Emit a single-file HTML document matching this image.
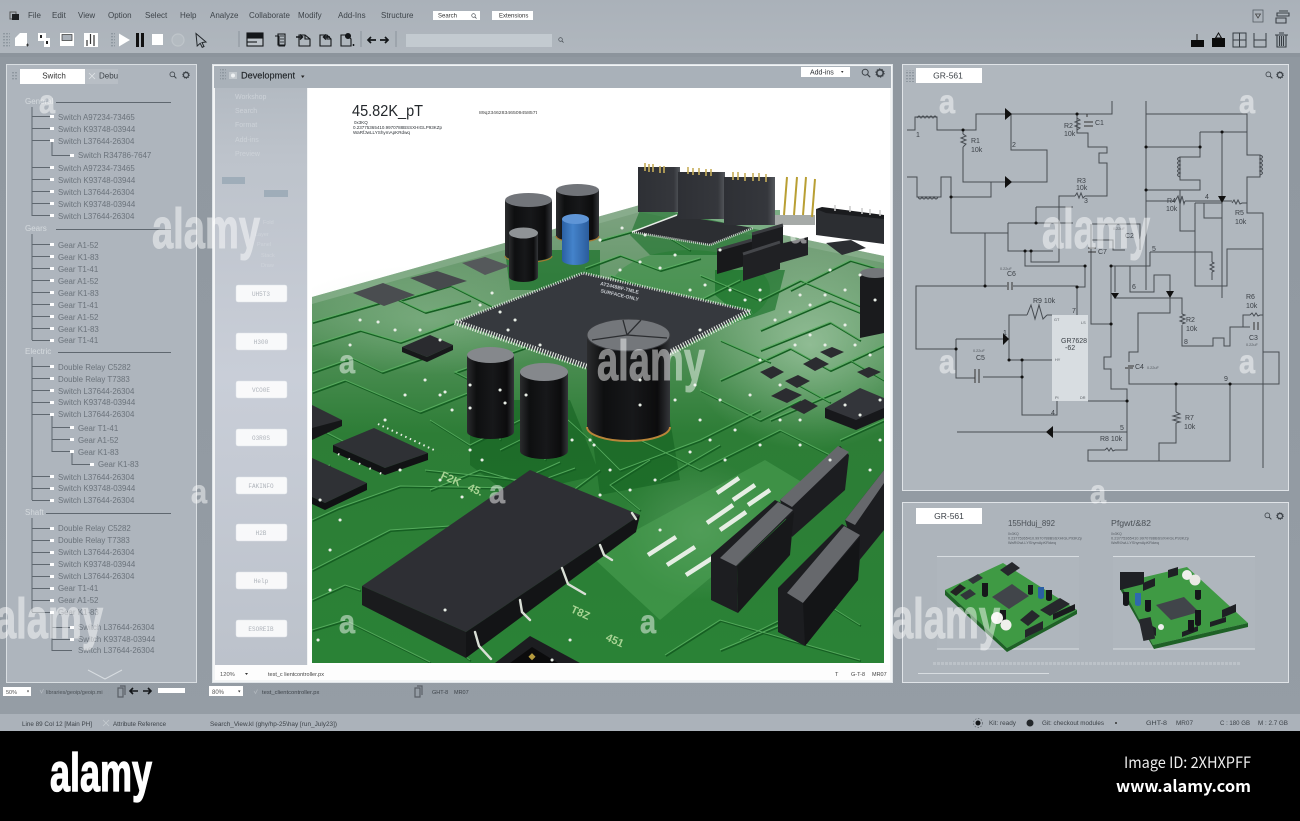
<!DOCTYPE html>
<html><head><meta charset="utf-8"><title>PCB design</title>
<style>
html,body{margin:0;padding:0;width:1300px;height:821px;overflow:hidden;background:#000}
svg{display:block;font-family:"Liberation Sans",sans-serif}
.m{font-size:8px;fill:#3e444a}
.t text{font-size:7.9px;fill:#6b737b}
.h text{font-size:8px;fill:#d5dade}
.tl{stroke:#5f676f;stroke-width:1;fill:none}
.sc{stroke:#474c52;stroke-width:1;fill:none}
.sl text{font-size:7px;fill:#3c4147}
.b{fill:#fff;fill-opacity:.88;stroke:#dfe3e8;stroke-width:.5}
.bt{font-family:"Liberation Mono",monospace;font-size:6px;fill:#aeb3ba;text-anchor:middle}
.s{font-size:6.5px;fill:#3c4248}
.wm{font-weight:bold;fill:#fff;stroke:#fff;stroke-width:1;opacity:.48}
</style></head><body>
<svg width="1300" height="821" viewBox="0 0 1300 821" xmlns="http://www.w3.org/2000/svg">
<defs>
<linearGradient id="tb" x1="0" y1="0" x2="0" y2="1"><stop offset="0" stop-color="#aab1b9"/><stop offset="1" stop-color="#b0b7be"/></linearGradient>
<linearGradient id="bg" x1="0" y1="0" x2="0" y2="1"><stop offset="0" stop-color="#8f979f"/><stop offset="1" stop-color="#959da5"/></linearGradient>
<linearGradient id="sb" x1="0" y1="0" x2="0" y2="1"><stop offset="0" stop-color="#b3bac2"/><stop offset=".12" stop-color="#bdc3cb"/><stop offset=".5" stop-color="#c9ced8"/><stop offset="1" stop-color="#bcc2cb"/></linearGradient>
<linearGradient id="pb" x1="0" y1="0" x2="0" y2="1"><stop offset="0" stop-color="#7ea281"/><stop offset=".25" stop-color="#5a9560"/><stop offset=".5" stop-color="#2d7d36"/><stop offset="1" stop-color="#2a8236"/></linearGradient>
<radialGradient id="pale" cx=".5" cy=".5" r=".5"><stop offset="0" stop-color="#c4e0c6" stop-opacity=".55"/><stop offset="1" stop-color="#c4e0c6" stop-opacity="0"/></radialGradient>
<linearGradient id="cy" x1="0" y1="0" x2="1" y2="0"><stop offset="0" stop-color="#2b2c2e"/><stop offset=".2" stop-color="#0e0f10"/><stop offset=".55" stop-color="#17181a"/><stop offset=".85" stop-color="#0c0c0d"/><stop offset="1" stop-color="#34363a"/></linearGradient>
<linearGradient id="cyb" x1="0" y1="0" x2="1" y2="0"><stop offset="0" stop-color="#2a5fa3"/><stop offset=".4" stop-color="#4483cb"/><stop offset="1" stop-color="#2b5c9c"/></linearGradient>
<linearGradient id="hd" x1="0" y1="0" x2="1" y2="0"><stop offset="0" stop-color="#2e3035"/><stop offset=".85" stop-color="#35373c"/><stop offset="1" stop-color="#55585d"/></linearGradient>
<clipPath id="pc"><rect x="312" y="150" width="572" height="513"/></clipPath>
<symbol id="sr" viewBox="0 0 10 10"><circle cx="4.2" cy="4.2" r="3" fill="none" stroke="#3d4349" stroke-width="1"/><path d="M6.4 6.4 9.2 9.2" stroke="#3d4349" stroke-width="1.2"/></symbol>
<symbol id="gr" viewBox="0 0 10 10"><circle cx="5" cy="5" r="3.2" fill="none" stroke="#3d4349" stroke-width="1.6"/><circle cx="5" cy="5" r="4.1" fill="none" stroke="#3d4349" stroke-width="1.1" stroke-dasharray="1.3 1.3"/></symbol>
<pattern id="gp" width="3" height="3" patternUnits="userSpaceOnUse"><rect width="2" height="1.4" fill="#8f98a0"/></pattern>
<path id="tr" d="M312 322 L395 298 L425 312 L470 300 M312 345 L360 330 L400 342 L455 322 M312 372 L352 358 L382 372 L445 350 M312 392 L345 380 L420 412 L470 392 M312 425 L360 450 M425 470 L520 480 L560 462 M312 520 L338 508 L400 486 L520 488 L575 468 M312 570 L390 530 L480 524 M312 600 L345 585 L360 590 M312 630 L345 620 L430 662 M420 622 L470 660 M560 335 L455 372 L510 400 M520 420 L470 445 L430 420 M568 420 L590 440 L620 470 L700 440 L760 410 M640 440 L700 470 L780 430 L830 455 M500 450 L560 420 M500 370 L500 440 M545 405 L545 460 M665 655 L720 620 L860 660 M720 650 L780 625 M585 268 L620 255 L660 270 L700 258 M600 240 L650 226 L690 250 M610 275 L640 285 M700 275 L760 300 L800 280 L870 310 M760 330 L830 300 L884 322 M760 350 L830 322 L860 340 M720 380 L790 348 L830 370 L884 345 M700 390 L760 420 L800 400 M770 420 L840 390 M840 440 L884 420 M790 290 L850 260 L884 270 M700 300 L740 280 M400 300 L450 285 L520 320 M312 470 L330 465 M430 490 L480 470 L540 488 M600 470 L560 500 M650 460 L610 485 L640 510 M660 480 L720 445 M850 360 L884 380 M790 380 L830 402 M720 340 L770 362 M740 640 L820 600 L860 625"/>
<path id="vias" d="M360 320h.1M378 322h.1M350 345h.1M395 330h.1M420 330h.1M440 340h.1M480 305h.1M500 312h.1M515 320h.1M492 293h.1M405 395h.1M425 380h.1M445 392h.1M470 385h.1M385 420h.1M440 395h.1M500 390h.1M526 395h.1M452 410h.1M470 450h.1M482 460h.1M440 480h.1M462 497h.1M572 440h.1M594 445h.1M610 470h.1M630 490h.1M655 480h.1M690 452h.1M710 440h.1M725 460h.1M760 445h.1M735 430h.1M780 420h.1M700 420h.1M720 400h.1M695 385h.1M750 395h.1M780 385h.1M800 420h.1M845 405h.1M860 415h.1M880 400h.1M795 345h.1M810 335h.1M825 345h.1M845 325h.1M855 345h.1M870 355h.1M775 320h.1M790 312h.1M810 305h.1M825 295h.1M845 290h.1M860 275h.1M760 290h.1M745 300h.1M620 270h.1M640 262h.1M660 268h.1M675 255h.1M690 290h.1M705 285h.1M645 235h.1M622 228h.1M600 240h.1M720 250h.1M730 290h.1M600 495h.1M640 405h.1M640 380h.1M675 400h.1M660 530h.1M652 552h.1M570 640h.1M445 610h.1M552 660h.1M590 440h.1M320 500h.1M340 520h.1M330 550h.1M330 590h.1M318 640h.1M400 470h.1M505 403h.1M470 408h.1M508 330h.1M540 345h.1M880 440h.1M870 470h.1M830 460h.1M800 445h.1M760 300h.1M700 330h.1M830 270h.1M875 300h.1M760 360h.1M800 295h.1"/>
</defs>

<!-- backgrounds -->
<rect width="1300" height="731" fill="url(#bg)"/>
<rect width="1300" height="53" fill="url(#tb)"/>
<rect y="714" width="1300" height="17" fill="#abb2ba"/>
<rect y="731" width="1300" height="90" fill="#000"/>

<!-- menu -->
<g fill="#1c1f22"><rect x="10" y="12" width="6" height="7" fill="none" stroke="#555" stroke-width="1"/><rect x="12" y="14" width="7" height="6"/></g>
<g class="m">
<text x="28" y="18">File</text><text x="52" y="18">Edit</text><text x="78" y="18">View</text><text x="108" y="18">Option</text><text x="145" y="18">Select</text><text x="180" y="18">Help</text><text x="210" y="18">Analyze</text><text x="249" y="18">Collaborate</text><text x="298" y="18">Modify</text><text x="338" y="18">Add-Ins</text><text x="381" y="18">Structure</text>
</g>
<rect x="433" y="11" width="47" height="9" fill="#fff"/><text x="438" y="17.5" font-size="6" fill="#333">Search</text><use href="#sr" x="471" y="13" width="6" height="6"/>
<rect x="492" y="11" width="41" height="9" fill="#fff"/><text x="499" y="17.5" font-size="6" fill="#333">Extensions</text>
<rect x="1253" y="10" width="10" height="12" fill="none" stroke="#555d64" stroke-width=".8"/><path d="M1255.500 14h5l-2.500 4z" fill="none" stroke="#444" stroke-width=".8"/>
<path d="M1277 13h12v3h-12zM1279 11h9M1276 18h10v5h-10z" fill="none" stroke="#3b4147" stroke-width="1.100"/>

<!-- toolbar -->
<rect x="3" y="33" width="7" height="14" fill="url(#gp)"/>
<path d="M15 46V38l5-5h7v13z" fill="#fff"/><path d="M26 45h3M27.500 43.500v3" stroke="#222" stroke-width=".8"/>
<rect x="38" y="33" width="8" height="8" fill="#fff"/><rect x="44" y="38" width="6" height="9" fill="#fff"/><rect x="40" y="35" width="2" height="3" fill="#222"/><rect x="46" y="41" width="2" height="3" fill="#222"/>
<path d="M60 33h14v13H60z" fill="#fff"/><rect x="62" y="34.500" width="10" height="6" fill="#aab1b9" stroke="#333" stroke-width=".7"/>
<rect x="84" y="33" width="14" height="14" fill="#fff"/><path d="M87 40v6M90.500 34v10M94 35v11" stroke="#333" stroke-width="1.200"/>
<rect x="110" y="33" width="5" height="14" fill="url(#gp)"/>
<path d="M119 33.500 130 40l-11 6.500z" fill="#fff"/>
<rect x="136" y="33" width="3" height="14" fill="#111"/><rect x="141" y="33" width="3" height="14" fill="#111"/>
<rect x="152" y="34" width="11" height="11" fill="#fff"/>
<circle cx="178" cy="40" r="6" fill="#b4bbc1" stroke="#bfc5ca" stroke-width="1.200"/>
<path d="M196 33.500 206 42l-4 .5 2 4-1.800.8-2-4-3 2.700z" fill="none" stroke="#23272b" stroke-width="1"/>
<path d="M239 31v16M361 31v16M396 31v16" stroke="#8b939b"/>
<g fill="none" stroke="#14171a" stroke-width="1.100">
<rect x="247" y="33" width="16" height="5" fill="#14171a"/><rect x="247" y="38" width="16" height="8" fill="#bcc2c8"/><path d="M247 42h10"/>
<path d="M278 34h7v11h-7zM275 36h4v10h6"/><path d="M280 36h4M280 39h4M280 42h4" stroke-width=".7"/>
<path d="M299 35h6l5 4v7h-11zM305 35v4h5"/><path d="M296 37h6M300 34.500l2.500 2.500-2.500 2.500" stroke-width="1.500"/>
<path d="M320 35h7l4 4v7h-11zM327 35v4h4"/><path d="M330 37h-6M326 34.500l-2.500 2.500 2.500 2.500" stroke-width="1.500"/>
<path d="M341 35h6l4 4v7h-10z"/><circle cx="348" cy="36" r="2.500" fill="#14171a"/><path d="M353.500 44v2" stroke-width="1.500"/>
<path d="M368 40h8M371 37l-3 3 3 3M380 40h8M385 37l3 3-3 3" stroke-width="1.700"/>
</g>
<rect x="406" y="34" width="146" height="13" fill="#c3cad0"/>
<use href="#sr" x="558" y="37" width="6" height="6"/>
<g fill="#0b0b0b"><rect x="1191" y="40" width="13" height="7"/><path d="M1197 34v6" stroke="#222"/><rect x="1212" y="38" width="13" height="9"/><path d="M1218.500 33l3 5h-6z" fill="none" stroke="#111"/></g>
<g fill="none" stroke="#373d43" stroke-width="1"><rect x="1233" y="33" width="13" height="14"/><path d="M1233 40h13M1239.500 33v14"/><path d="M1254 33v14h12V33M1254 40h12"/><path d="M1275 35h13M1277 35v12h9V35M1279.500 36v10M1281.500 36v10M1283.500 36v10M1279 33h5" stroke-width="1.100"/></g>
<rect x="0" y="53" width="1300" height="4" fill="#8b939b" opacity=".6"/>

<!-- left panel -->
<rect x="6.500" y="64.500" width="190" height="618" fill="#aeb5bd" stroke="#d9dee2"/>
<rect x="12" y="71" width="6" height="10" fill="url(#gp)"/>
<rect x="20" y="69" width="65" height="15" fill="#fff"/><text x="54" y="78.500" font-size="8" fill="#333" text-anchor="middle">Switch</text>
<rect x="85" y="69" width="33" height="15" fill="#b8bec5"/><path d="M89 73l6 6M95 73l-6 6" stroke="#dfe3e6" stroke-width=".8"/><text x="99" y="78.500" font-size="8" fill="#3c4248">Debu</text>
<use href="#sr" x="169" y="71" width="8" height="8"/><use href="#gr" x="182" y="71" width="8" height="8"/>
<g class="h"><text x="25" y="104">General</text><text x="25" y="231">Gears</text><text x="25" y="354">Electric</text><text x="25" y="515">Shaft</text></g>
<path class="tl" d="M56 102.500H171M56 229.500H171M58 352.500H171M46 513.500H171" stroke-width="1.300"/>
<path class="tl" d="M32 107V216M32 116.500H50M32 128.500H50M32 140.500H50M52 141V155.500H70M32 167.500H50M32 179.500H50M32 191.500H50M32 203.500H50M32 215.500H50
M32 234V340M32 244.500H50M32 256.500H50M32 268.500H50M32 280.500H50M32 292.500H50M32 304.500H50M32 316.500H50M32 328.500H50M32 340.500H50
M32 357V500M32 366.500H50M32 378.500H50M32 390.500H50M32 402.500H50M32 414.500H50M52 415V452M52 427.500H70M52 439.500H70M52 451.500H70M72 452V465M72 464.500H90M32 476.500H50M32 488.500H50M32 500.500H50
M32 518V612M32 528.500H50M32 540.500H50M32 552.500H50M32 564.500H50M32 576.500H50M32 588.500H50M32 600.500H50M32 612.500H50M52 613V651M52 627.500H70M52 639.500H70M52 650.500H72"/>
<path fill="#fff" d="M50 115h4v3h-4zM50 127h4v3h-4zM50 139h4v3h-4zM70 154h4v3h-4zM50 166h4v3h-4zM50 178h4v3h-4zM50 190h4v3h-4zM50 202h4v3h-4zM50 214h4v3h-4zM50 243h4v3h-4zM50 255h4v3h-4zM50 267h4v3h-4zM50 279h4v3h-4zM50 291h4v3h-4zM50 303h4v3h-4zM50 315h4v3h-4zM50 327h4v3h-4zM50 339h4v3h-4zM50 365h4v3h-4zM50 377h4v3h-4zM50 389h4v3h-4zM50 401h4v3h-4zM50 413h4v3h-4zM70 426h4v3h-4zM70 438h4v3h-4zM70 450h4v3h-4zM90 463h4v3h-4zM50 475h4v3h-4zM50 487h4v3h-4zM50 499h4v3h-4zM50 527h4v3h-4zM50 539h4v3h-4zM50 551h4v3h-4zM50 563h4v3h-4zM50 575h4v3h-4zM50 587h4v3h-4zM50 599h4v3h-4zM50 611h4v3h-4zM70 626h4v3h-4zM70 638h4v3h-4z"/>
<g class="t">
<text x="58" y="120">Switch A97234-73465</text><text x="58" y="132">Switch K93748-03944</text><text x="58" y="144">Switch L37644-26304</text><text x="78" y="158">Switch R34786-7647</text><text x="58" y="171">Switch A97234-73465</text><text x="58" y="183">Switch K93748-03944</text><text x="58" y="195">Switch L37644-26304</text><text x="58" y="207">Switch K93748-03944</text><text x="58" y="219">Switch L37644-26304</text>
<text x="58" y="248">Gear A1-52</text><text x="58" y="260">Gear K1-83</text><text x="58" y="272">Gear T1-41</text><text x="58" y="284">Gear A1-52</text><text x="58" y="296">Gear K1-83</text><text x="58" y="308">Gear T1-41</text><text x="58" y="320">Gear A1-52</text><text x="58" y="332">Gear K1-83</text><text x="58" y="343">Gear T1-41</text>
<text x="58" y="370">Double Relay C5282</text><text x="58" y="382">Double Relay T7383</text><text x="58" y="394">Switch L37644-26304</text><text x="58" y="405">Switch K93748-03944</text><text x="58" y="417">Switch L37644-26304</text><text x="78" y="431">Gear T1-41</text><text x="78" y="443">Gear A1-52</text><text x="78" y="455">Gear K1-83</text><text x="98" y="467">Gear K1-83</text><text x="58" y="480">Switch L37644-26304</text><text x="58" y="491">Switch K93748-03944</text><text x="58" y="503">Switch L37644-26304</text>
<text x="58" y="531">Double Relay C5282</text><text x="58" y="543">Double Relay T7383</text><text x="58" y="555">Switch L37644-26304</text><text x="58" y="567">Switch K93748-03944</text><text x="58" y="579">Switch L37644-26304</text><text x="58" y="591">Gear T1-41</text><text x="58" y="603">Gear A1-52</text><text x="58" y="615">Gear K1-83</text><text x="78" y="630">Switch L37644-26304</text><text x="78" y="642">Switch K93748-03944</text><text x="78" y="653">Switch L37644-26304</text>
</g>
<path d="M88 670 105 679 122 670" fill="none" stroke="#d7dce0" stroke-width="1"/>

<!-- left under bar -->
<rect x="3" y="687" width="28" height="9" fill="#fff"/><text x="6" y="694" font-size="5.500" fill="#555">50%</text><path d="M27 690.500l2 0-1 2z" fill="#333"/>
<path d="M40 690l1.500 3 2-4" fill="none" stroke="#b5bbc1" stroke-width=".7"/><text x="46" y="694" font-size="5.500" fill="#4a5056">libraries/geoip/geoip.mi</text>
<path d="M118 688h5v9h-5zM120 686h5v9" fill="none" stroke="#5a6067" stroke-width="1.200"/>
<path d="M130 691h8M133 688l-3 3 3 3M143 691h8M148 688l3 3-3 3" fill="none" stroke="#14171a" stroke-width="1.600"/>
<rect x="158" y="688" width="27" height="5" fill="#fff"/>

<!-- center panel -->
<rect x="212.500" y="64.500" width="680" height="618" fill="#f2f4f5" stroke="#dfe4e8"/>
<rect x="214" y="66" width="677" height="22" fill="#a9b1b9"/>
<rect x="220" y="69" width="6" height="12" fill="url(#gp)"/>
<rect x="229" y="72" width="8" height="7" fill="#c3c9ce"/><circle cx="233" cy="75.500" r="2" fill="#eef1f3"/>
<text x="241" y="78.500" font-size="9" fill="#22262a" textLength="54" lengthAdjust="spacingAndGlyphs" stroke="#22262a" stroke-width=".15">Development</text>
<path d="M301 75.500h3.500l-1.750 2.500z" fill="#222"/>
<rect x="801" y="67" width="49" height="10" fill="#fff"/><text x="810" y="74.500" font-size="7" fill="#2c3035">Add-ins</text><path d="M841 71h2.500l-1.250 2z" fill="#333"/>
<use href="#sr" x="861" y="68" width="10" height="10"/><use href="#gr" x="875" y="68" width="10" height="10"/>
<rect x="308" y="88" width="582" height="592" fill="#fff"/>
<rect x="215" y="88" width="92" height="577" fill="url(#sb)"/>
<g font-size="7" fill="#cdd2d8"><text x="235" y="99">Workshop</text><text x="235" y="113">Search</text><text x="235" y="127">Format</text><text x="235" y="142">Add-ins</text><text x="235" y="156">Preview</text></g>
<rect x="222" y="177" width="23" height="7" fill="#9fadb9"/><rect x="264" y="190" width="24" height="7" fill="#9fadb9"/>
<g font-size="5.500" fill="#ced3da"><text x="263" y="224">Fold</text><text x="255" y="236">Layer</text><text x="257" y="246">Panel</text><text x="261" y="257">Stack</text><text x="261" y="267">Draw</text></g>
<rect class="b" x="236" y="285" width="51" height="17" rx="2"/><text class="bt" x="261" y="296">UH5T3</text>
<rect class="b" x="236" y="333" width="51" height="17" rx="2"/><text class="bt" x="261" y="344">H300</text>
<rect class="b" x="236" y="381" width="51" height="17" rx="2"/><text class="bt" x="261" y="392">VCO0E</text>
<rect class="b" x="236" y="429" width="51" height="17" rx="2"/><text class="bt" x="261" y="440">O3R0S</text>
<rect class="b" x="236" y="477" width="51" height="17" rx="2"/><text class="bt" x="261" y="488">FAKINFO</text>
<rect class="b" x="236" y="524" width="51" height="17" rx="2"/><text class="bt" x="261" y="535">H2B</text>
<rect class="b" x="236" y="572" width="51" height="17" rx="2"/><text class="bt" x="261" y="583">Help</text>
<rect class="b" x="236" y="620" width="51" height="17" rx="2"/><text class="bt" x="261" y="631">ESOREIB</text>
<rect x="215" y="665" width="675" height="15" fill="#fdfdfd"/>
<text x="220" y="676" font-size="5.800" fill="#555">120%</text><path d="M245 673h3l-1.500 2z" fill="#333"/><text x="268" y="676" font-size="5.500" fill="#444">test_c lientcontroller.px</text>
<text x="835" y="676" font-size="5.500" fill="#444">T</text><text x="851" y="676" font-size="5.500" fill="#444">G-T-8</text><text x="872" y="676" font-size="5.500" fill="#444">MR07</text>

<!-- content text -->
<text x="352" y="116" font-size="16" fill="#24282c" textLength="71" lengthAdjust="spacingAndGlyphs">45.82K_pT</text>
<g font-size="4.500" fill="#2e3338"><text x="354" y="124">0x3KQ</text><text x="353" y="129" textLength="89" lengthAdjust="spacingAndGlyphs">0.23775365410.9970788BSSXHIGLP93KZp</text><text x="353" y="134" textLength="57" lengthAdjust="spacingAndGlyphs">WaRfJwLLYShymApKRdwq</text></g>
<text x="479" y="114" font-size="4.800" fill="#444" textLength="58" lengthAdjust="spacingAndGlyphs">89q23462834650945857t</text>

<!-- PCB -->
<g clip-path="url(#pc)">
<path d="M312 297 L640 205 L884 256 V663 H312Z" fill="url(#pb)"/>
<path d="M312 297 L640 205 L884 256 V263 L640 212 L312 304Z" fill="#96b89a" opacity=".5"/>
<ellipse cx="810" cy="345" rx="125" ry="105" fill="url(#pale)"/>
<ellipse cx="430" cy="320" rx="150" ry="55" fill="url(#pale)" opacity=".5"/>
<ellipse cx="690" cy="290" rx="80" ry="40" fill="#1e8a2b" opacity=".35"/>
<ellipse cx="700" cy="530" rx="80" ry="70" fill="url(#pale)" opacity=".4"/>
<!-- reflection -->
<path d="M470 400h100l30 75-90 20-40-30zM590 420h80l10 60-80 15z" fill="#125f1f" opacity=".55"/>
<path d="M505 250h95v40h-90z" fill="#0e6b1e" opacity=".6"/>
<path d="M640 210h140v15l-60 30h-70l-20-20z" fill="#116b20" opacity=".55"/>
<path d="M715 270h70l-10 40-30 10-30-25z" fill="#0f6d1f" opacity=".6"/>
<use href="#tr" x="1" y="1.200" fill="none" stroke="#155f22" stroke-width="1.600"/>
<use href="#tr" fill="none" stroke="#5cb263" stroke-width="1" opacity=".85"/>
<!-- pale pad area -->
<path d="M590 555 L765 460 L815 490 L660 620Z" fill="#55a85c" opacity=".45"/>
<g stroke="#e6eee4" stroke-width="4.500"><path d="M648 555l28-18M667 565l28-18M686 575l28-18M707 523l26-18M720 530l26-18M717 493l22-15M733 500l22-15M748 505l22-15"/></g>
<!-- back chips -->
<path d="M353 293l30-10 32 12-31 11z" fill="#4a4d50"/><path d="M410 278l27-7 30 10-29 9z" fill="#474a4d"/><path d="M462 263l23-6 25 9-25 9z" fill="#55595b"/>
<path d="M402 347l28-12 23 10-26 12z" fill="#2a2b2f"/><path d="M402 347l25 10 26-12v5l-26 12-25-10z" fill="#17181a"/>
<path d="M312 405l30 15-30 15z" fill="#2f3034"/><path d="M312 428l30-8v6l-30 14z" fill="#151618"/>
<path d="M333 445l41-17 54 25-43 15z" fill="#2f3135"/><path d="M333 445l52 23 43-15v7l-43 15-52-23z" fill="#111214"/>
<path d="M312 458l55 25-42 20-13-6z" fill="#2f3135"/><path d="M312 497l13 6 42-20v7l-42 20-13-6z" fill="#101113"/>
<path d="M378 424 L434 450" fill="none" stroke="#e8eee4" stroke-width="2" stroke-dasharray="1.500 3.500"/>
<path d="M338 454 L382 474" fill="none" stroke="#e8eee4" stroke-width="2.200" stroke-dasharray="1.500 10"/>
<!-- main QFP -->
<path d="M455 322 L583 273 L751 311 L620 380Z" fill="#36393e"/>
<path d="M455 322 L620 378 L751 311" fill="none" stroke="#e6ece4" stroke-width="6" stroke-dasharray="1.100 1.600"/>
<path d="M455 322 L583 273 L751 311" fill="none" stroke="#d8ded8" stroke-width="3" stroke-dasharray="1 1.500"/>
<g transform="translate(600 285) rotate(13)"><text x="0" y="0" font-size="5" fill="#c7cbd0" font-weight="bold">AT2448BF-TMLE</text><text x="2" y="7" font-size="5" fill="#c7cbd0" font-weight="bold">SURFACE-ONLY</text></g>
<!-- back QFP -->
<path d="M632 232 L677 215 L753 228 L710 245Z" fill="#2c2e32"/>
<path d="M632 232 L710 245 L753 228" fill="none" stroke="#c9cfca" stroke-width="2.500" stroke-dasharray="1 1"/>
<path d="M632 232 L677 215" stroke="#e9eee8" stroke-width="1.500"/>
<!-- headers -->
<rect x="638" y="167" width="42" height="45" fill="url(#hd)"/>
<rect x="678" y="172" width="47" height="47" fill="url(#hd)"/>
<rect x="724" y="177" width="51" height="48" fill="url(#hd)"/>
<path d="M775 215h40v10h-40z" fill="#a6aaa8"/>
<g stroke="#c6ad5a" stroke-width="1.600"><path d="M645 163v8M649 164v8M653 164v8M660 166v7M664 166v7M688 167v7M693 168v7M699 168v7M706 169v7M711 169v7M733 172v8M738 172v8M745 173v8M753 173v8M759 173v8M766 174v8"/></g>
<g stroke="#b99f34" stroke-width="2"><path d="M787 177l-3 38M797 177l-3 38M806 177l-3 38M815 179l-3 38"/></g>
<path d="M816 209 884 216V244L816 235Z" fill="#2c2e32"/><path d="M816 209l6-2 62 8v4l-58-6" fill="#1a1b1e"/>
<g stroke="#ccc" stroke-width="1.500"><path d="M835 205v6M850 206v6M862 208v6M870 209v6M880 210v6"/></g>
<!-- blocks -->
<path d="M717 250l35-10v24l-35 10z" fill="#18191b"/><path d="M717 250l35-10" stroke="#3a3c40" stroke-width="3"/>
<path d="M752 234l31-9v23l-31 9z" fill="#1c1d20"/><path d="M752 234l31-9" stroke="#3a3c40" stroke-width="3"/>
<path d="M780 244l28-7v18l-28 8z" fill="#202124"/>
<path d="M743 254l37-12v27l-37 12z" fill="#202124"/><path d="M743 254l37-12" stroke="#44464a" stroke-width="3"/>
<path d="M826 243l25-3 15 8-24 7z" fill="#2c2e32"/>
<!-- right chips -->
<path d="M860 275l24-5v63l-24 5z" fill="#1a1b1d"/><ellipse cx="875" cy="273" rx="15" ry="5" fill="#74777a"/>
<path d="M771 396l15-8 16 7-15 8z" fill="#2b2c30"/><path d="M790 407l15-8 13 7-14 8z" fill="#2b2c30"/><path d="M760 372l13-6 11 6-13 7z" fill="#2b2c30"/><path d="M785 381l13-6 12 6-13 7z" fill="#2b2c30"/><path d="M803 364l13-7 13 7-14 7z" fill="#2b2c30"/><path d="M820 352l12-5 12 5-13 6z" fill="#2b2c30"/><path d="M857 372l12-5 12 5-13 6z" fill="#2b2c30"/><path d="M825 408l35-20 24 10v19l-28 13z" fill="#33353a"/><path d="M825 408l31 12 28-12v10l-28 12-31-12z" fill="#17181b"/>
<!-- big chip -->
<path d="M362 586 L530 470 L640 515 L466 632Z" fill="#2e2f34"/>
<path d="M362 586 L466 632 V658 L362 605Z" fill="#1a1b1d"/>
<path d="M466 632 L640 515 L636 532 L466 658Z" fill="#131416"/>
<g stroke="#d9dfd6" stroke-width="2.400" fill="none" stroke-linecap="round"><path d="M562 568l6 16 17 10M600 545l4 10 8 5M520 600l2 12 8 8M475 632l4 14 12 13M632 513l4 6"/></g>
<!-- bottom corner chip -->
<path d="M495 663 L530 636 L580 663Z" fill="#1c1d20"/><path d="M510 663L532 647L558 663Z" fill="#0b0b0c"/><rect x="530" y="654" width="5" height="5" fill="#b59b3e" transform="rotate(45 532 656)"/>
<!-- right black blocks -->
<path d="M780 500 L840 446 L849 455 L845 490 L792 537Z" fill="#1c1d20"/><path d="M780 500 L838 446 L849 452 L792 507Z" fill="#66686c"/>
<path d="M845 520 L884 470 V530 L858 562Z" fill="#1c1d20"/><path d="M845 520 L884 470 V483 L855 525Z" fill="#66686c"/>
<path d="M711 555 L775 500 L795 510 L737 566 L738 613 L711 600Z" fill="#1d1e21"/><path d="M720 558 L778 502 L793 510 L736 566Z" fill="#66686c"/><path d="M737 566 L794 512 L790 555 L738 613Z" fill="#17181a"/>
<path d="M778 588 L842 524 L862 536 L858 580 L805 646 L778 632Z" fill="#1c1d20"/><path d="M787 593 L844 526 L860 535 L803 603Z" fill="#66686c"/><path d="M803 603 L860 537 L858 580 L805 646Z" fill="#141517"/>
<!-- capacitors -->
<path d="M505 200V255a23 6 0 0 0 47 0V200z" fill="url(#cy)"/><ellipse cx="528.500" cy="200" rx="23.500" ry="7" fill="#72757a"/><path d="M505 256a23 6 0 0 0 47 0" fill="none" stroke="#a5762f" stroke-width="1.200"/>
<path d="M556 190V236a21.500 6 0 0 0 43 0V190z" fill="url(#cy)"/><ellipse cx="577.500" cy="190" rx="21.500" ry="6" fill="#717479"/><path d="M556 236a21.500 6 0 0 0 43 0" fill="none" stroke="#a5762f" stroke-width="1.200"/>
<path d="M562 219V260a13.500 5 0 0 0 27 0V219z" fill="url(#cyb)"/><ellipse cx="575.500" cy="219" rx="13.500" ry="5" fill="#5f95d6"/>
<path d="M509 234V277a14.500 5 0 0 0 29 0V234z" fill="url(#cy)"/><ellipse cx="523.500" cy="233" rx="14.500" ry="5.500" fill="#8f9396"/>
<path d="M467 355V432a23.500 7 0 0 0 47 0V355z" fill="url(#cy)"/><ellipse cx="490.500" cy="355" rx="23.500" ry="8" fill="#85888c"/>
<path d="M520 372V451a24 8 0 0 0 48 0V372z" fill="url(#cy)"/><ellipse cx="544" cy="372" rx="24" ry="9" fill="#85888c"/>
<path d="M587 335V428a41 13 0 0 0 83 0V335z" fill="url(#cy)"/><path d="M587 427a41.500 14 0 0 0 83 0" fill="none" stroke="#b98539" stroke-width="2"/>
<ellipse cx="628.500" cy="335" rx="41.500" ry="16" fill="#74777b"/><ellipse cx="628.500" cy="335" rx="41.500" ry="16" fill="none" stroke="#3a3c40"/>
<path d="M627 335l-4-15M627 335l14-15M627 335l-35 5M627 335l40 3" stroke="#2c2e31" stroke-width="1.300"/>
<use href="#vias" fill="none" stroke="#e8eee6" stroke-width="3" stroke-linecap="round"/>
<g font-size="11" fill="#a8d494" font-weight="bold"><text transform="translate(440 478) rotate(24)">F2K</text><text transform="translate(467 490) rotate(24)">45.</text><text transform="translate(570 612) rotate(24)">T8Z</text><text transform="translate(605 640) rotate(24)">451</text></g>
</g>

<!-- center under bar -->
<rect x="209" y="686" width="34" height="10" fill="#fff"/><text x="212" y="694" font-size="6" fill="#555">80%</text><path d="M238 690.500h2.500l-1.250 2z" fill="#333"/>
<path d="M254 691l1.500 2.500 2-4" fill="none" stroke="#b5bbc1" stroke-width=".7"/><text x="262" y="694" font-size="5.800" fill="#3e444a">test_clientcontroller.px</text>
<path d="M415 688h5v9h-5zM417 686h5v9" fill="none" stroke="#5a6067" stroke-width="1.200"/><text x="432" y="694" font-size="5.500" fill="#3e444a">GHT-8</text><text x="454" y="694" font-size="5.500" fill="#3e444a">MR07</text>

<!-- right top panel -->
<rect x="902.500" y="64.500" width="386" height="426" fill="#b0b7be" stroke="#e0e4e8"/>
<rect x="906" y="70" width="8" height="12" fill="url(#gp)"/>
<rect x="916" y="68" width="66" height="15" fill="#fff"/><text x="948" y="78.500" font-size="8.500" fill="#3a3f45" text-anchor="middle">GR-561</text>
<use href="#sr" x="1265" y="71" width="8" height="8"/><use href="#gr" x="1276" y="71" width="8" height="8"/>
<rect x="1052" y="315" width="36" height="86" fill="#d8dde1"/>
<path class="sc" d="M907 130H915V117H937V130H976V114H1112V101M1011 114V150H1047V182H963V147M963 134V130
M907 177H917V197H941V177H951V233H1008M951 197H991V182M1008 223V251H1053M1008 223H1073M1036 207V223M1036 207H1073M1025 251V266H1085M1031 251V262H1059V196H1075M1085 196H1107V163H1099V153H1107V147H1088V133H1077V118M1077 130V114
M1146 101V290M1146 114H1247V155H1260V177H1247V213H1263V468M1146 147H1200M1200 132H1247M1200 132V157H1180V180H1200V190H1146M1222 132V298M1146 201H1175M1185 201H1222H1232M1242 203H1247M1180 190V231H1195M1195 203V286H1227V249H1263M1195 203H1222M1204 203V218H1222
M1150 252H1212V262M1212 272V280M1150 252V266H1130V292H1154V275H1170V293M1115 266V292M1115 298H1182V314M1182 325V346H1213V338H1224V346H1230V327H1243V315H1250M1260 315H1263M1170 298V313H1138V352H1129V362M1129 369V384H1279V352H1263
M1091 224V324H1111V357H1104V369H1111V389H1127V450H1115M1105 450H1088V461H1230V384M1111 266V324M1085 266V287H1077M985 233V286H1007M1013 286H1077M985 286H916V349H956M956 339H1003M956 339V378H975M983 377H1022M1009 360V315H1027M1047 315H1052M1009 360H1052M1022 360V415H1057V401M1077 286V315M1088 401H1127M957 432H1127M1176 384V412M1176 423V443H1159V461M1263 468M1092 224H1140V250M1092 240H1113V250H1125M1111 266H1130M1243 327H1250"/>
<path class="sc" d="M917 118q2-4 4 0q2-4 4 0q2-4 4 0q2-4 4 0q2-4 4 0M918 197q2 4 4 0q2 4 4 0q2 4 4 0q2 4 4 0q2 4 4 0M1260 155q5 2 0 4q5 2 0 4q5 2 0 4q5 2 0 4q5 2 0 4M1180 157q-5 2 0 4q-5 2 0 4q-5 2 0 4q-5 2 0 4q-5 2 0 4M963 134l3 2-5 2 5 2-5 2 5 2-3 3M1077 118l3 2-5 2 5 2-5 2 5 2-3 2M1075 196l2-3 2 5 2-5 2 5 2-2M1175 201l3-5 2 8 2-8 2 8 1-3M1232 203l2-3 2 4 2-4 2 4 2-1M1212 262l2 1-4 2 4 2-4 2 4 2-2 1M1027 315l4-10 4 14 4-14 4 14 4-4M1182 314l3 1-5 2 5 2-5 2 5 2-3 1M1105 450l2-2 2 3 2-3 2 3 2-1M1176 412l4 2-7 2 7 2-7 2 7 2-4 1M1250 315l2-2 2 3 2-3 2 3 2-1"/>
<path d="M1005 108l7 6-7 6zM1005 176l7 6-7 6zM1218 196h8l-4 7zM1111 293h8l-4 6zM1166 291h8l-4 7zM1003 333l6 6-6 6zM1053 426l-7 6 7 6z" fill="#111"/>
<path d="M963 130h.1M1077 114h.1M951 197h.1M1036 223h.1M1025 251h.1M1031 251h.1M1085 266h.1M1111 266h.1M1146 147h.1M1200 147h.1M1222 132h.1M1146 190h.1M985 286h.1M1077 287h.1M956 349h.1M1009 360h.1M1022 360h.1M1022 377h.1M1111 324h.1M1127 401h.1M1176 384h.1M1230 384h.1" stroke="#111" stroke-width="3" stroke-linecap="round" fill="none"/>
<path d="M1084 122h9M1084 126h9M1087 117v-3" stroke="#333" fill="none"/><path d="M1008 282v8M1012 282v8M1128 366h6M1125 368h8M975 369v14M979 369v14M1254 322v8M1258 322v8M1088 248h8M1088 252h8" stroke="#333" fill="none"/>
<g class="sl">
<text x="916" y="137">1</text><text x="971" y="143">R1</text><text x="971" y="152">10k</text><text x="1064" y="128">R2</text><text x="1064" y="136">10k</text><text x="1095" y="125">C1</text><text x="1012" y="147">2</text><text x="1077" y="183">R3</text><text x="1076" y="190">10k</text><text x="1084" y="203">3</text><text x="1167" y="203">R4</text><text x="1166" y="211">10k</text><text x="1205" y="199">4</text><text x="1235" y="215">R5</text><text x="1235" y="224">10k</text><text x="1152" y="251">5</text><text x="1098" y="254" font-size="6.500">C7</text><text x="1125" y="238">C2</text><text x="1007" y="276">C6</text><text x="1132" y="289">6</text>
<text x="1033" y="303">R9 10k</text><text x="1072" y="313">7</text><text x="1003" y="335">1</text><text x="976" y="360">C5</text><text x="1135" y="369">C4</text><text x="1186" y="322">R2</text><text x="1186" y="331">10k</text><text x="1184" y="344">8</text><text x="1246" y="299">R6</text><text x="1246" y="308">10k</text><text x="1249" y="340">C3</text><text x="1224" y="381">9</text><text x="1051" y="415">4</text><text x="1120" y="430">5</text><text x="1185" y="420">R7</text><text x="1184" y="429">10k</text><text x="1100" y="441">R8 10k</text>
<text x="1061" y="343" font-size="6">GR7628</text><text x="1065" y="350" font-size="6">-62</text>
</g>
<g font-size="3.800" fill="#555a60"><text x="1054" y="321">GT</text><text x="1081" y="324">LS</text><text x="1055" y="361">HY</text><text x="1055" y="399">PI</text><text x="1080" y="399">DR</text><text x="973" y="352">0.22uF</text><text x="1147" y="369">0.22uF</text><text x="1246" y="346">0.22uF</text><text x="1000" y="270">0.22uF</text><text x="1113" y="230">0.22uF</text></g>

<!-- right bottom panel -->
<rect x="902.500" y="502.500" width="386" height="180" fill="#adb4bb" stroke="#e0e4e8"/>
<rect x="916" y="508" width="66" height="16" fill="#fff"/><text x="949" y="519" font-size="8.500" fill="#3a3f45" text-anchor="middle">GR-561</text>
<use href="#sr" x="1264" y="512" width="8" height="8"/><use href="#gr" x="1276" y="512" width="8" height="8"/>
<text x="1008" y="526" font-size="8.500" fill="#4a5056" textLength="47" lengthAdjust="spacingAndGlyphs">155Hduj_892</text>
<text x="1111" y="526" font-size="8.500" fill="#4a5056" textLength="40" lengthAdjust="spacingAndGlyphs">Pfgwt/&amp;82</text>
<g font-size="3.500" fill="#555b62"><text x="1008" y="535">0x3KQ</text><text x="1008" y="539.500" textLength="74" lengthAdjust="spacingAndGlyphs">0.23775365410.9970788BSSXHIGLP93KZp</text><text x="1008" y="544" textLength="48" lengthAdjust="spacingAndGlyphs">WaRfJwLLYShymApKRdwq</text><text x="1111" y="535">0x3KQ</text><text x="1111" y="539.500" textLength="78" lengthAdjust="spacingAndGlyphs">0.23775365410.9970788BSSXHIGLP93KZp</text><text x="1111" y="544" textLength="48" lengthAdjust="spacingAndGlyphs">WaRfJwLLYShymApKRdwq</text></g>
<rect x="937" y="556" width="142" height="93" fill="#afb6bd"/><rect x="1113" y="556" width="142" height="93" fill="#afb6bd"/>
<path d="M937 556.500h142M937 649h142M1113 556.500h142M1113 649h142" stroke="#d8dde1" stroke-width="1"/>
<path d="M945 590 1003 563 1077 610 1007 648Z" fill="#3f9a44"/><path d="M945 590 1007 648 1007 652 945 595ZM1007 648 1077 610V614L1007 652Z" fill="#1e6126"/>
<path d="M992 597l20-13 17 12-20 13z" fill="#41454a"/><path d="M950 592l10-8 6 4-10 8z" fill="#222"/><path d="M1040 610l20-12 10 6-20 12zM1020 620l12-10 8 6-12 10zM1000 570l12-8 8 6-12 8z" fill="#26282c"/><path d="M968 580l10-6 5 4-10 6zM960 595l10-6 6 5-10 6z" fill="#31353a"/>
<path d="M1038 587v10a3 2 0 0 0 6 0v-10z" fill="#2a5fa3"/><path d="M1028 585v9a3 2 0 0 0 5 0v-9zM1046 590v9a3 2 0 0 0 6 0v-9zM982 583v12a3 2 0 0 0 6 0v-12zM1000 610v13a3 2 0 0 0 6 0v-13z" fill="#16171a"/>
<circle cx="997" cy="618" r="6" fill="#f4f4f0"/><circle cx="1006" cy="625" r="5.500" fill="#f0f0ec"/><path d="M1025 630l18-9v8l-18 9z" fill="#24262a"/><path d="M1053 620l22-10v-6l-22 10z" fill="#1a1b1e"/>
<path d="M1120 583 1187 567 1248 623 1153 645Z" fill="#3f9a44"/><path d="M1120 583 1153 645 1154 649 1120 589ZM1153 645 1248 623V627L1154 649Z" fill="#1e6126"/>
<path d="M1156 605l28-8 15 15-28 8z" fill="#41454a"/><path d="M1120 572h24v12l-24 6z" fill="#1e2024"/><path d="M1143 583l12-5v8l-12 5zM1168 570l10-3v8l-10 3zM1142 620l14 8v8l-14-8zM1182 632l16-6v5l-16 6zM1210 622l16-5v5l-16 5zM1222 610l14-6v8l-14 6z" fill="#1e2024"/>
<path d="M1135 593v11a3 2 0 0 0 6 0v-11z" fill="#2f69ad"/><path d="M1123 592v12a3 2 0 0 0 6 0v-12zM1145 600v10a3 2 0 0 0 6 0v-10zM1195 610v14a3 2 0 0 0 6 0v-14zM1188 620v10a3 2 0 0 0 6 0v-10zM1195 590v8a3 2 0 0 0 6 0v-8z" fill="#15161a"/>
<circle cx="1187" cy="575" r="5" fill="#f0f0ec"/><circle cx="1195" cy="580" r="5.500" fill="#e9e9e4"/><rect x="1141" y="618" width="12" height="22" fill="#26282c" transform="rotate(-12 1147 629)"/><circle cx="1161" cy="627" r="3" fill="#eee"/>
<path d="M933 663.500H1240" stroke="#bcc2c8" stroke-width="3" stroke-dasharray="3 1"/><path d="M918 673.500H1049" stroke="#d7dce0" stroke-width="1"/>

<!-- status bar -->
<g class="s">
<text x="22" y="726" textLength="70" lengthAdjust="spacingAndGlyphs">Line 89 Col 12 [Main PH]</text>
<text x="113" y="726" textLength="53" lengthAdjust="spacingAndGlyphs">Attribute Reference</text>
<text x="210" y="726" textLength="127" lengthAdjust="spacingAndGlyphs">Search_View.kl (ghy/hp-25\hay [run_July23])</text>
<text x="989" y="725" textLength="27" lengthAdjust="spacingAndGlyphs">Kit: ready</text>
<text x="1042" y="725" textLength="62" lengthAdjust="spacingAndGlyphs">Git: checkout modules</text>
<text x="1146" y="725" textLength="21" lengthAdjust="spacingAndGlyphs">GHT-8</text>
<text x="1176" y="725" textLength="17" lengthAdjust="spacingAndGlyphs">MR07</text>
<text x="1220" y="725" textLength="30" lengthAdjust="spacingAndGlyphs">C : 180 GB</text>
<text x="1258" y="725" textLength="30" lengthAdjust="spacingAndGlyphs">M : 2.7 GB</text>
</g>
<path d="M103 720l6 6M109 720l-6 6" stroke="#c5cbd0" stroke-width=".8"/>
<circle cx="978" cy="723" r="2.500" fill="#14171a"/><circle cx="978" cy="723" r="4.500" fill="none" stroke="#5a6067" stroke-width=".7" stroke-dasharray="1.500 1.500"/>
<circle cx="1030" cy="723" r="3.500" fill="#23272b"/><circle cx="1116" cy="723" r="1" fill="#333"/>

<!-- watermarks -->
<g class="wm">
<text x="152" y="248" font-size="57" textLength="108" lengthAdjust="spacingAndGlyphs">alamy</text>
<text x="1042" y="248" font-size="57" textLength="108" lengthAdjust="spacingAndGlyphs">alamy</text>
<text x="597" y="380" font-size="57" textLength="108" lengthAdjust="spacingAndGlyphs">alamy</text>
<text x="-5" y="638" font-size="57" textLength="108" lengthAdjust="spacingAndGlyphs">alamy</text>
<text x="892" y="638" font-size="57" textLength="108" lengthAdjust="spacingAndGlyphs">alamy</text>
<g font-size="33" stroke-width=".6"><text x="39" y="113" textLength="16" lengthAdjust="spacingAndGlyphs">a</text><text x="939" y="113" textLength="16" lengthAdjust="spacingAndGlyphs">a</text><text x="1239" y="113" textLength="16" lengthAdjust="spacingAndGlyphs">a</text><text x="939" y="373" textLength="16" lengthAdjust="spacingAndGlyphs">a</text><text x="1239" y="373" textLength="16" lengthAdjust="spacingAndGlyphs">a</text><text x="191" y="503" textLength="16" lengthAdjust="spacingAndGlyphs">a</text><text x="1090" y="503" textLength="16" lengthAdjust="spacingAndGlyphs">a</text><text x="339" y="373" textLength="16" lengthAdjust="spacingAndGlyphs">a</text><text x="339" y="633" textLength="16" lengthAdjust="spacingAndGlyphs">a</text><text x="640" y="633" textLength="16" lengthAdjust="spacingAndGlyphs">a</text><text x="790" y="243" textLength="16" lengthAdjust="spacingAndGlyphs">a</text><text x="489" y="503" textLength="16" lengthAdjust="spacingAndGlyphs">a</text></g>
</g>

<!-- footer -->
<text x="50" y="791" font-size="54" font-weight="bold" fill="#fff" stroke="#fff" stroke-width="1.300" textLength="102" lengthAdjust="spacingAndGlyphs">alamy</text>
<text x="1251" y="768" font-size="15.500" fill="#eee" text-anchor="end" textLength="127" lengthAdjust="spacingAndGlyphs" style="font-family:'Noto Sans CJK JP','Liberation Sans',sans-serif">Image ID: 2XHXPFF</text>
<text x="1251" y="792" font-size="16" font-weight="bold" fill="#fff" text-anchor="end" textLength="135" lengthAdjust="spacingAndGlyphs" style="font-family:'Noto Sans CJK JP','Liberation Sans',sans-serif">www.alamy.com</text>
</svg>
</body></html>
